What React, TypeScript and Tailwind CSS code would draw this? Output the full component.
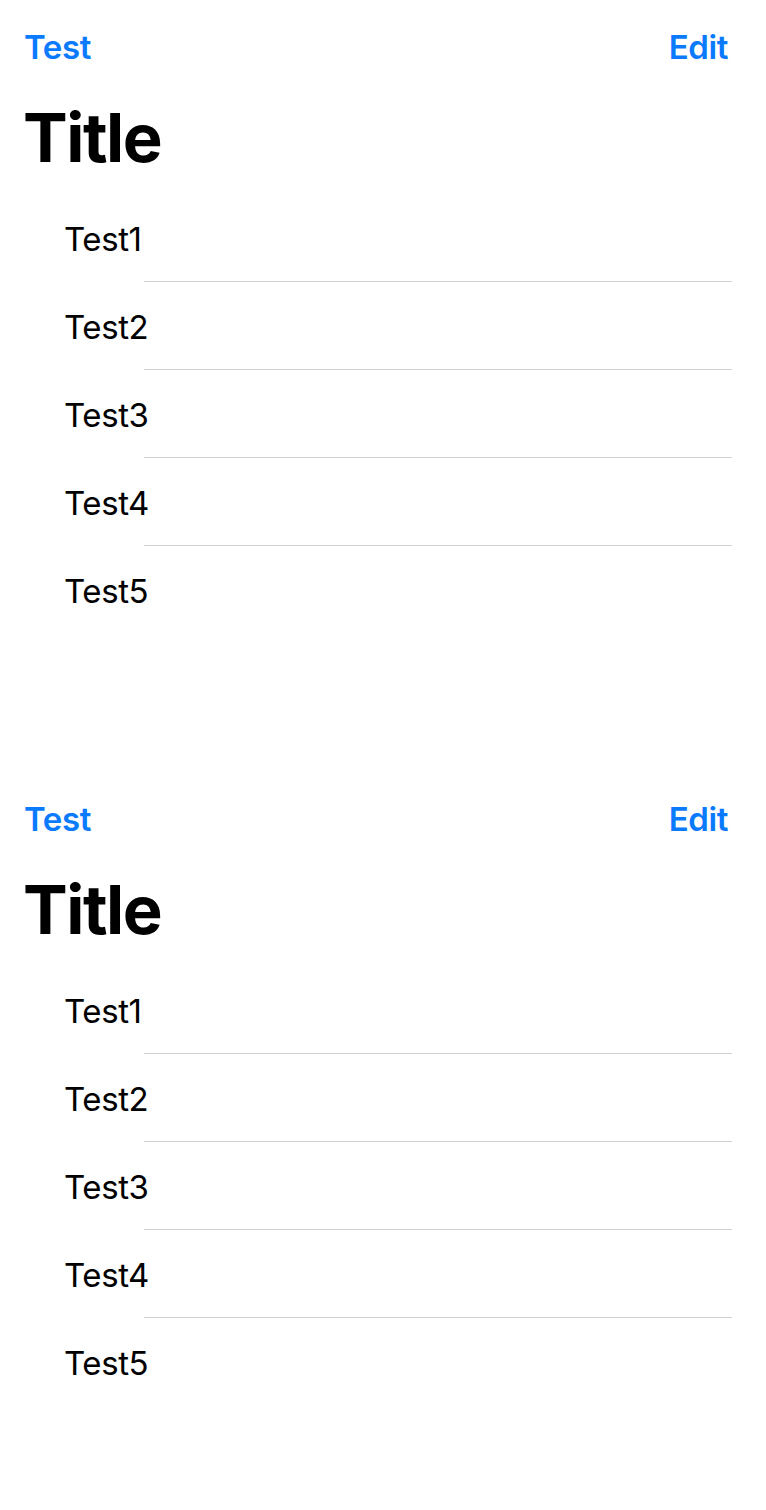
import React from 'react';

const items = ['Test1', 'Test2', 'Test3', 'Test4', 'Test5'];

const ListScreen = () => {
  return (
    <section className="h-[772px] bg-white">
      {/* Nav bar */}
      <div className="h-[95px] flex items-center justify-between pl-[24px] pr-[38px]">
        <span className="text-[#0a7aff] text-[33px] font-semibold leading-none tracking-[-0.4px]">Test</span>
        <span className="text-[#0a7aff] text-[33px] font-semibold leading-none tracking-[-0.4px]">Edit</span>
      </div>

      {/* Large title */}
      <h1 className="pl-[23px] text-[67px] font-bold leading-[85px] tracking-[-1.5px] text-black">Title</h1>

      {/* List */}
      <div className="mt-[14px]">
        {items.map((item, i) => (
          <div key={item}>
            <div className="h-[87px] flex items-center pt-[3px] pl-[64px] text-[33px] leading-none text-black tracking-[-0.4px]">
              {item}
            </div>
            {i < items.length - 1 && <div className="h-px ml-[144px] mr-[34px] bg-[#d1d1d6]" />}
          </div>
        ))}
      </div>
    </section>
  );
};

const App = () => {
  return (
    <div className="min-h-screen bg-white font-['Inter',sans-serif]">
      <ListScreen />
      <ListScreen />
    </div>
  );
};

export default App;
